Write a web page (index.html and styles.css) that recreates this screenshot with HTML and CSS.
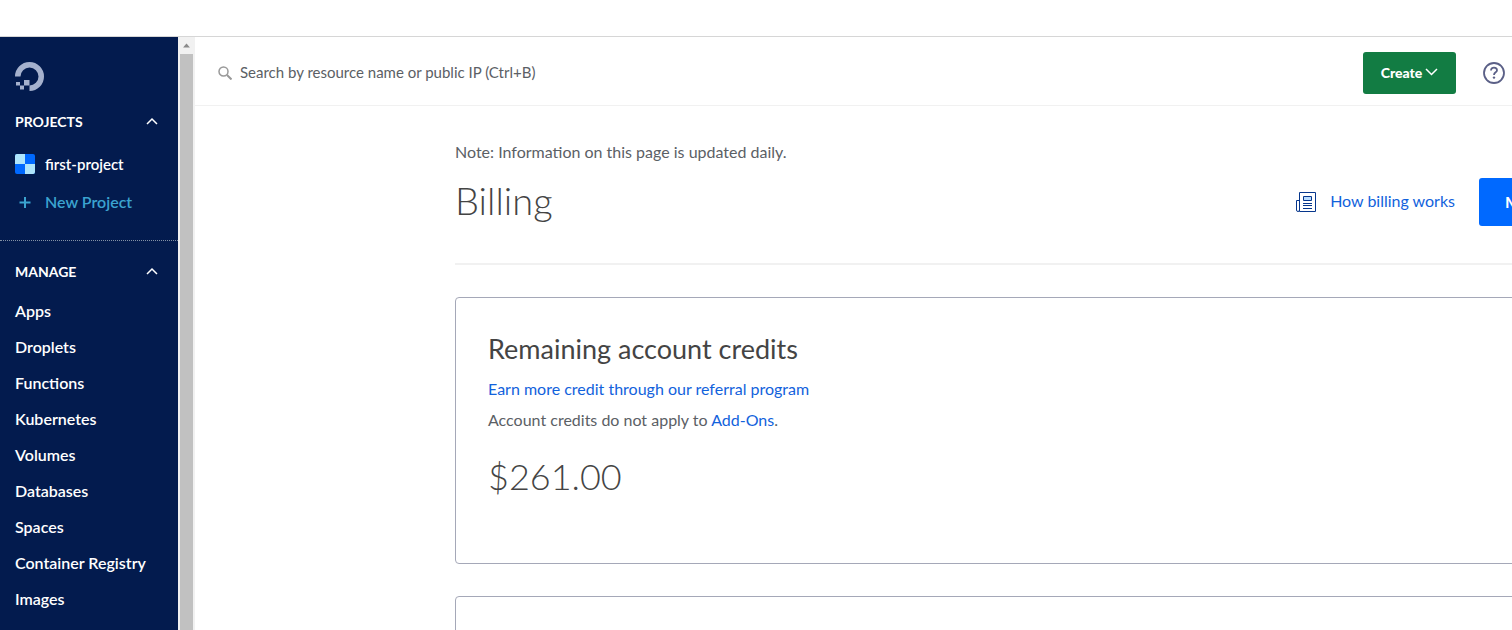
FILE: index.html
```html
<!DOCTYPE html>
<html lang="en">
<head>
    <meta charset="utf-8" />
    <title>Billing</title>
    <link rel="stylesheet" href="styles.css">
</head>
<body>
    <div class="strip"></div>
    <div class="app">
        <nav class="sidebar">
            <a href="#" class="logo" aria-label="Home">
                <svg width="30" height="30" viewBox="0 0 30 30">
                    <path d="M0 14.500A14.500 14.500 0 1 1 14.500 29V23.500A9 9 0 1 0 5.500 14.500Z" fill="#a5b1cd" />
                    <path d="M9 18h5.500v5.500H9zM5 23.500h4v4H5zM1 20h4v3.500H1z" fill="#a5b1cd" />
                </svg>
            </a>
            <button class="section">PROJECTS
                <svg width="12" height="8" viewBox="0 0 12 8"><path d="M1 7l5-5 5 5" /></svg>
            </button>
            <a href="#" class="project">
                <svg width="20" height="20" viewBox="0 0 20 20">
                    <rect width="20" height="20" rx="2" fill="#0069ff" />
                    <path d="M2 0h8v10H0V2a2 2 0 0 1 2-2zM10 10h10v8a2 2 0 0 1-2 2h-8z" fill="#aee5fc" />
                </svg>
                first-project
            </a>
            <a href="#" class="project new">
                <svg width="20" height="20" viewBox="0 0 20 20"><path d="M10 5v11M4.500 10.500h11" stroke="#3ba3d0" stroke-width="2" /></svg>
                New Project
            </a>
            <hr class="dashes">
            <button class="section">MANAGE
                <svg width="12" height="8" viewBox="0 0 12 8"><path d="M1 7l5-5 5 5" /></svg>
            </button>
            <ul class="menu">
                <li><a href="#">Apps</a></li>
                <li><a href="#">Droplets</a></li>
                <li><a href="#">Functions</a></li>
                <li><a href="#">Kubernetes</a></li>
                <li><a href="#">Volumes</a></li>
                <li><a href="#">Databases</a></li>
                <li><a href="#">Spaces</a></li>
                <li><a href="#">Container Registry</a></li>
                <li><a href="#">Images</a></li>
            </ul>
        </nav>
        <div class="scrollbar">
            <svg width="17" height="17" viewBox="0 0 17 17"><path d="M4 11l4.500-5 4.500 5z" fill="#8a8a8a" /></svg>
            <div class="thumb"></div>
        </div>
        <main class="main">
            <header class="topbar">
                <label class="search">
                    <svg width="14" height="14" viewBox="0 0 14 14" fill="none" stroke="#999">
                        <circle cx="5.500" cy="5.500" r="4.500" stroke-width="1.500" />
                        <path d="M9 9l4.500 4.500" stroke-width="2" />
                    </svg>
                    <input type="text" aria-label="Search" placeholder="Search by resource name or public IP (Ctrl+B)">
                </label>
                <button class="create">Create
                    <svg width="13" height="8" viewBox="0 0 13 8"><path d="M1 1l5.500 5.500L12 1" /></svg>
                </button>
                <button class="help" aria-label="Help">
                    <svg width="22" height="22" viewBox="0 0 22 22" fill="none" stroke="#5b6087">
                        <circle cx="11" cy="11" r="10" stroke-width="1.800" />
                        <path d="M8 8.500c0-4 6-3.500 6-.3 0 2.300-3 2-3 4.800" stroke-width="1.800" />
                        <circle cx="11" cy="15.600" r="1.200" fill="#5b6087" stroke="none" />
                    </svg>
                </button>
            </header>
            <div class="content">
                <p class="note">Note: Information on this page is updated daily.</p>
                <div class="heading">
                    <h1>Billing</h1>
                    <a href="#" class="how">
                        <svg width="20" height="20" viewBox="0 0 20 20" fill="none" stroke="#06368c">
                            <path d="M3.500.5h16v19h-16z" />
                            <path d="M3.500 8.500h-3v9.500a1.500 1.500 0 0 0 3 0" />
                            <path d="M7.500 4.500h8v4h-8z" fill="#b9dcff" />
                            <path d="M7 11.500h9M7 13.500h9M7 16.500h9" />
                        </svg>
                        How billing works
                    </a>
                    <button class="pay">Make a payment</button>
                </div>
                <section class="card">
                    <h2>Remaining account credits</h2>
                    <p><a href="#">Earn more credit through our referral program</a></p>
                    <p>Account credits do not apply to <a href="#">Add-Ons</a>.</p>
                    <div class="amount">$261.00</div>
                </section>
                <section class="card"></section>
            </div>
        </main>
    </div>
</body>
</html>
```
FILE: styles.css
```css
* {
    box-sizing: border-box;
}

body {
    margin: 0;
    height: 100vh;
    display: flex;
    flex-direction: column;
    overflow: hidden;
    background-color: #fff;
    color: #5b6065;
    font-family: Lato, "Open Sans", sans-serif;
    font-size: 16px;
    line-height: 24px;
}

a {
    color: #1262dc;
    text-decoration: none;
}

button {
    border: 0;
    padding: 0;
    font-family: inherit;
    cursor: pointer;
}

.strip {
    flex: none;
    height: 37px;
    border-bottom: 1px solid #d6d6d6;
}

.app {
    flex: 1;
    min-height: 0;
    display: flex;
}

/* sidebar */
.sidebar {
    flex: none;
    width: 178px;
    padding-top: 25px;
    overflow: hidden;
    background-color: #031b4e;
}

.logo {
    display: block;
    height: 30px;
    margin: 0 15px 17px;
}

.section {
    display: flex;
    justify-content: space-between;
    align-items: center;
    width: 100%;
    height: 24px;
    padding: 0 20px 0 15px;
    background: none;
    color: #fff;
    font-size: 14px;
    font-weight: bold;
}

.section svg,
.create svg {
    fill: none;
    stroke: #fff;
    stroke-width: 1.5;
}

.project {
    display: flex;
    align-items: center;
    gap: 10px;
    height: 38px;
    padding: 0 15px;
    color: #fff;
    font-size: 15px;
    font-weight: 600;
}

.section + .project {
    margin-top: 12px;
}

.new {
    color: #3ba3d0;
    font-size: 16px;
}

.dashes {
    margin: 19px 0 18px;
    border: 0;
    border-top: 1px dotted #8391a5;
}

.menu {
    list-style: none;
    margin: 10px 0 0;
    padding: 0;
}

.menu a {
    display: block;
    padding: 0 15px;
    line-height: 36px;
    color: #fff;
    font-size: 16px;
    font-weight: 600;
}

.scrollbar {
    flex: none;
    display: flex;
    flex-direction: column;
    width: 17px;
    padding: 0 2px;
    background-color: #f1f1f1;
}

.scrollbar svg {
    flex: none;
    width: 13px;
}

.thumb {
    flex: 1;
    background-color: #c1c1c1;
}

/* main */
.main {
    flex: 1;
    min-width: 0;
    overflow: hidden;
}

.topbar {
    display: flex;
    align-items: center;
    height: 69px;
    padding: 4px 7px 0 23px;
    border-bottom: 1px solid #f1f1f1;
}

.search {
    flex: 1;
    display: flex;
    align-items: center;
    gap: 8px;
}

.search input {
    flex: 1;
    border: 0;
    padding: 0 0 2px;
    outline: none;
    font-family: inherit;
    font-size: 15px;
    line-height: 24px;
}

.search input::placeholder {
    color: #5b6065;
    opacity: 1;
}

.create {
    display: flex;
    justify-content: center;
    align-items: center;
    gap: 3px;
    width: 93px;
    height: 42px;
    padding-bottom: 2px;
    border-radius: 3px;
    background-color: #127c43;
    color: #fff;
    font-size: 14px;
    font-weight: 900;
}

.help {
    height: 22px;
    margin-left: 27px;
    background: none;
}

.content {
    width: 1460px;
    padding: 34px 0 0 260px;
}

.note {
    margin: 0;
}

.heading {
    display: flex;
    align-items: center;
    height: 101px;
    padding-bottom: 24px;
    border-bottom: 2px solid #f1f1f1;
}

h1 {
    margin: 0;
    margin-right: auto;
    padding-bottom: 4px;
    color: #444;
    font-size: 38px;
    line-height: 48px;
    font-weight: 300;
}

.how {
    display: flex;
    align-items: center;
    gap: 14px;
    padding-bottom: 2px;
}

.how svg {
    margin-top: 2px;
}

.pay {
    width: 176px;
    height: 48px;
    margin-left: 24px;
    padding: 0 26px;
    border-radius: 3px;
    background-color: #0069ff;
    color: #fff;
    font-size: 16px;
    font-weight: bold;
    text-align: left;
    white-space: nowrap;
}

.card {
    min-height: 267px;
    margin-top: 32px;
    padding: 31px 32px;
    border: 1px solid #a5a8b8;
    border-radius: 4px;
}

.card h2 {
    margin: 0 0 8px;
    color: #444;
    font-size: 27px;
    line-height: 40px;
    font-weight: normal;
}

.card p {
    margin: 0 0 7px;
}

.amount {
    margin-top: 20px;
    color: #444;
    font-size: 36px;
    line-height: 48px;
    font-weight: 300;
}
```
